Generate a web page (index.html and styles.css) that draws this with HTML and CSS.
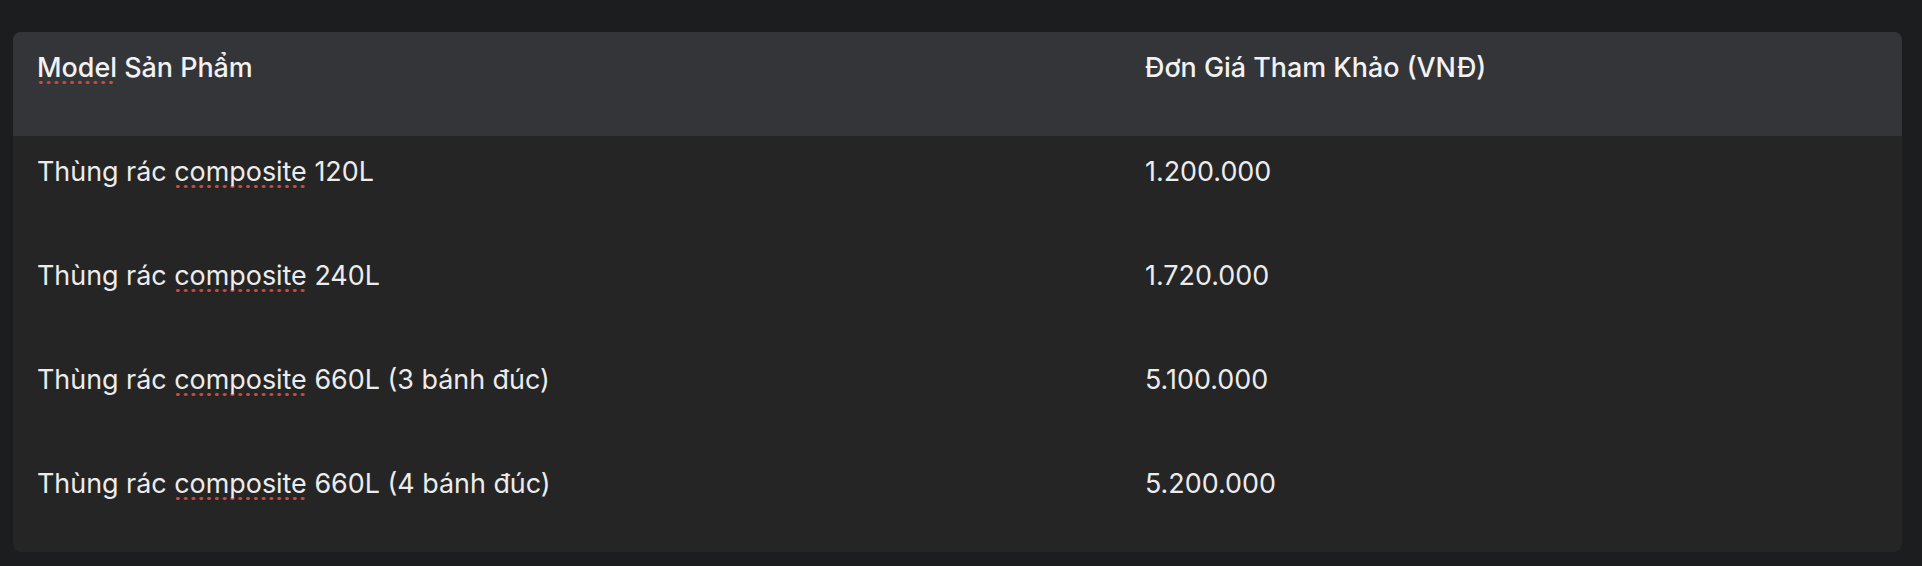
FILE: index.html
```html
<!DOCTYPE html>
<html lang="vi">
<head>
<meta charset="utf-8">
<link rel="stylesheet" href="styles.css">
</head>
<body>
<div class="wrap">
  <table class="price-table">
    <thead>
      <tr>
        <th class="col-model"><span class="spell">Model</span> Sản Phẩm</th>
        <th class="col-price">Đơn Giá Tham Khảo (VNĐ)</th>
      </tr>
    </thead>
    <tbody>
      <tr><td>Thùng rác <span class="spell">composite</span> 120L</td><td>1.200.000</td></tr>
      <tr><td>Thùng rác <span class="spell">composite</span> 240L</td><td>1.720.000</td></tr>
      <tr><td>Thùng rác <span class="spell">composite</span> 660L (3 bánh đúc)</td><td>5.100.000</td></tr>
      <tr><td>Thùng rác <span class="spell">composite</span> 660L (4 bánh đúc)</td><td>5.200.000</td></tr>
    </tbody>
  </table>
</div>
</body>
</html>
```

FILE: styles.css
```css
html, body {
  margin: 0;
  padding: 0;
  background: #1c1d1f;
}
body {
  font-family: "Inter", "Noto Sans", sans-serif;
  color: #ececec;
}
.wrap {
  padding: 32px 20px 15px 13px;
}
.price-table {
  width: 100%;
  border-collapse: separate;
  border-spacing: 0;
  border-radius: 8px;
  overflow: hidden;
  background: #252525;
  table-layout: fixed;
}
.price-table th,
.price-table td {
  box-sizing: border-box;
  text-align: left;
  vertical-align: top;
  padding: 17px 24px 0 24px;
  height: 104px;
  font-size: 26.9px;
  line-height: 36px;
}
.col-model { width: 1108px; }
.price-table th {
  background: #343538;
  font-weight: 500;
  color: #f2f2f2;
}
.price-table td {
  font-weight: 400;
}
.spell {
  padding-bottom: 2px;
  background-image: radial-gradient(circle, #cc4a3e 1.5px, transparent 2px);
  background-size: 7.8px 5px;
  background-repeat: repeat-x;
  background-position: 0 100%;
}
```
